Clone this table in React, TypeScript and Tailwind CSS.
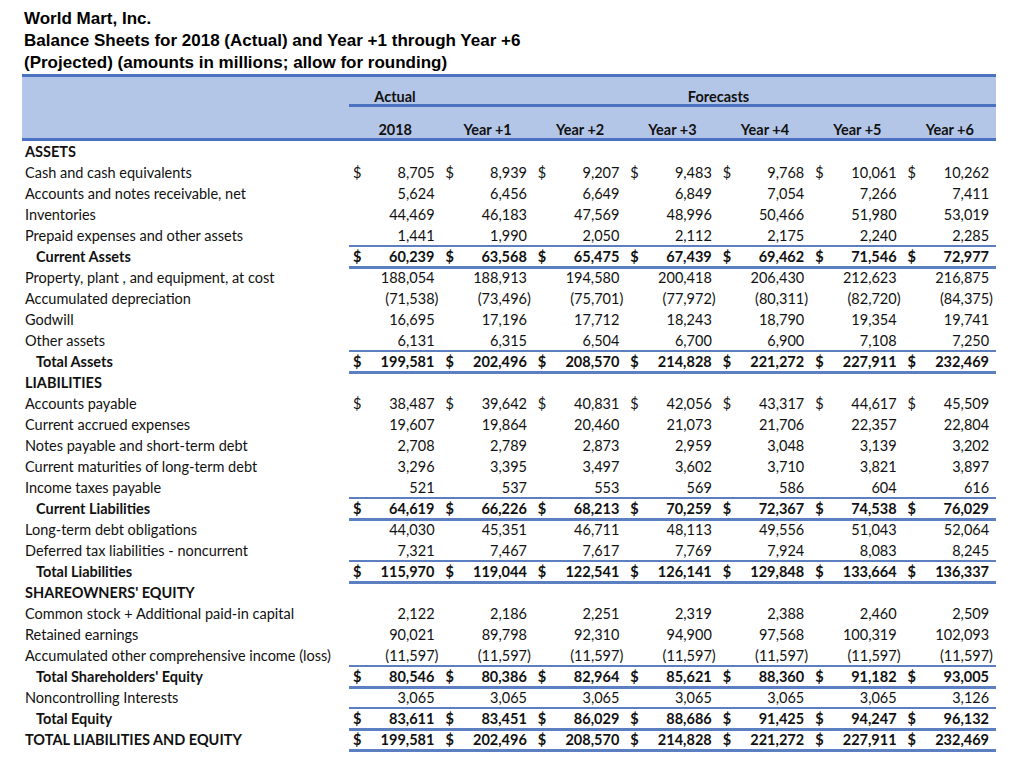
type Row = {
  label: string;
  kind?: "section" | "sub" | "grand";
  dollar?: boolean;
  values?: string[];
  top?: boolean;
  bottom?: boolean;
};

const years = ["2018", "Year +1", "Year +2", "Year +3", "Year +4", "Year +5", "Year +6"];

const rows: Row[] = [
  { label: "ASSETS", kind: "section" },
  { label: "Cash and cash equivalents", dollar: true, values: ["8,705", "8,939", "9,207", "9,483", "9,768", "10,061", "10,262"] },
  { label: "Accounts and notes receivable, net", values: ["5,624", "6,456", "6,649", "6,849", "7,054", "7,266", "7,411"] },
  { label: "Inventories", values: ["44,469", "46,183", "47,569", "48,996", "50,466", "51,980", "53,019"] },
  { label: "Prepaid expenses and other assets", values: ["1,441", "1,990", "2,050", "2,112", "2,175", "2,240", "2,285"] },
  { label: "Current Assets", kind: "sub", dollar: true, top: true, bottom: true, values: ["60,239", "63,568", "65,475", "67,439", "69,462", "71,546", "72,977"] },
  { label: "Property, plant , and equipment, at cost", values: ["188,054", "188,913", "194,580", "200,418", "206,430", "212,623", "216,875"] },
  { label: "Accumulated depreciation", values: ["(71,538)", "(73,496)", "(75,701)", "(77,972)", "(80,311)", "(82,720)", "(84,375)"] },
  { label: "Godwill", values: ["16,695", "17,196", "17,712", "18,243", "18,790", "19,354", "19,741"] },
  { label: "Other assets", values: ["6,131", "6,315", "6,504", "6,700", "6,900", "7,108", "7,250"] },
  { label: "Total Assets", kind: "sub", dollar: true, top: true, bottom: true, values: ["199,581", "202,496", "208,570", "214,828", "221,272", "227,911", "232,469"] },
  { label: "LIABILITIES", kind: "section" },
  { label: "Accounts payable", dollar: true, values: ["38,487", "39,642", "40,831", "42,056", "43,317", "44,617", "45,509"] },
  { label: "Current accrued expenses", values: ["19,607", "19,864", "20,460", "21,073", "21,706", "22,357", "22,804"] },
  { label: "Notes payable and short-term debt", values: ["2,708", "2,789", "2,873", "2,959", "3,048", "3,139", "3,202"] },
  { label: "Current maturities of long-term debt", values: ["3,296", "3,395", "3,497", "3,602", "3,710", "3,821", "3,897"] },
  { label: "Income taxes payable", values: ["521", "537", "553", "569", "586", "604", "616"] },
  { label: "Current Liabilities", kind: "sub", dollar: true, top: true, bottom: true, values: ["64,619", "66,226", "68,213", "70,259", "72,367", "74,538", "76,029"] },
  { label: "Long-term debt obligations", values: ["44,030", "45,351", "46,711", "48,113", "49,556", "51,043", "52,064"] },
  { label: "Deferred tax liabilities - noncurrent", values: ["7,321", "7,467", "7,617", "7,769", "7,924", "8,083", "8,245"] },
  { label: "Total Liabilities", kind: "sub", dollar: true, top: true, bottom: true, values: ["115,970", "119,044", "122,541", "126,141", "129,848", "133,664", "136,337"] },
  { label: "SHAREOWNERS' EQUITY", kind: "section" },
  { label: "Common stock + Additional paid-in capital", values: ["2,122", "2,186", "2,251", "2,319", "2,388", "2,460", "2,509"] },
  { label: "Retained earnings", values: ["90,021", "89,798", "92,310", "94,900", "97,568", "100,319", "102,093"] },
  { label: "Accumulated other comprehensive income (loss)", values: ["(11,597)", "(11,597)", "(11,597)", "(11,597)", "(11,597)", "(11,597)", "(11,597)"] },
  { label: "Total Shareholders' Equity", kind: "sub", dollar: true, top: true, bottom: true, values: ["80,546", "80,386", "82,964", "85,621", "88,360", "91,182", "93,005"] },
  { label: "Noncontrolling Interests", values: ["3,065", "3,065", "3,065", "3,065", "3,065", "3,065", "3,126"] },
  { label: "Total Equity", kind: "sub", dollar: true, top: true, bottom: true, values: ["83,611", "83,451", "86,029", "88,686", "91,425", "94,247", "96,132"] },
  { label: "TOTAL LIABILITIES AND EQUITY", kind: "grand", dollar: true, bottom: true, values: ["199,581", "202,496", "208,570", "214,828", "221,272", "227,911", "232,469"] },
];

const Amount = ({ v }: { v: string }) => {
  const neg = v.startsWith("(");
  return (
    <span>
      {v}
      {!neg && <span className="invisible">)</span>}
    </span>
  );
};

const BalanceRow = ({ row }: { row: Row }) => {
  const bold = row.kind === "sub" || row.kind === "grand" || row.kind === "section";
  // rules drawn with shadows so they straddle the row edges without eating row height
  const rule =
    row.top && row.bottom
      ? "shadow-[0_-1px_0_#5b7fc0,inset_0_1px_0_#5b7fc0,0_2px_0_#5b7fc0,inset_0_-1px_0_#5b7fc0]"
      : row.bottom
      ? "shadow-[0_2px_0_#5b7fc0,inset_0_-1px_0_#5b7fc0]"
      : "";
  return (
    <div className={`flex h-[21px] ${bold ? "font-bold" : ""}`}>
      <div className={`w-[327px] flex items-center whitespace-nowrap ${row.kind === "sub" ? "pl-[14px]" : "pl-[3px]"}`}>
        {row.label}
      </div>
      {row.values && (
        <div className={`flex-1 grid grid-cols-7 ${rule}`}>
          {row.values.map((v, i) => (
            <div key={i} className="flex items-center justify-between pl-[4px] pr-[3px]">
              <span>{row.dollar ? "$" : ""}</span>
              <Amount v={v} />
            </div>
          ))}
        </div>
      )}
    </div>
  );
};

export default function App() {
  return (
    <div className="w-[1024px] h-[766px] bg-white text-[#111] overflow-hidden">
      <div className="h-[74px] pl-[24px] pt-[8px] font-bold text-[17px] leading-[22px] text-black font-['Liberation_Sans',Arial,sans-serif]">
        <div>World Mart, Inc.</div>
        <div>Balance Sheets for 2018 (Actual) and Year +1 through Year +6</div>
        <div>(Projected) (amounts in millions; allow for rounding)</div>
      </div>

      <div className="ml-[22px] w-[974px] text-[14.5px] leading-[18px] font-['Lato','Open_Sans',sans-serif]">
        <div className="bg-[#b4c6e7] border-t-[3px] border-b-[3px] border-[#4a72c0] font-bold">
          <div className="flex h-[30px]">
            <div className="w-[327px]" />
            <div className="flex-1 flex border-b-[3px] border-[#4a72c0] pt-[11px]">
              <div className="w-[92px] text-center">Actual</div>
              <div className="flex-1 text-center">Forecasts</div>
            </div>
          </div>
          <div className="flex h-[31px] pt-[14px]">
            <div className="w-[327px]" />
            <div className="flex-1 grid grid-cols-7">
              {years.map((y) => (
                <div key={y} className="text-center">
                  {y}
                </div>
              ))}
            </div>
          </div>
        </div>
        {rows.map((r) => (
          <BalanceRow key={r.label} row={r} />
        ))}
      </div>
    </div>
  );
}
